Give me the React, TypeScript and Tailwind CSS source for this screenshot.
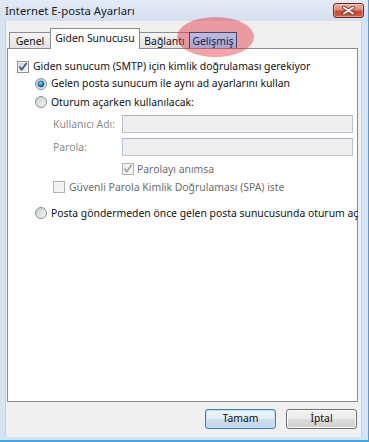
const FONT = "[font-family:'Noto_Sans','Liberation_Sans',sans-serif]";

function CheckBox({ checked, disabled, id }: { checked?: boolean; disabled?: boolean; id: string }) {
  const border = disabled ? '#b1b1b1' : '#8e8f8f';
  const from = disabled ? '#ececec' : '#cfd2d7';
  const to = disabled ? '#f7f7f7' : '#f6f6f6';
  const mark = disabled ? '#a3a3a3' : '#3d4f8c';
  return (
    <svg width="12" height="12" viewBox="0 0 12 12" className="shrink-0">
      <defs>
        <linearGradient id={id} x1="0" y1="0" x2="1" y2="1">
          <stop offset="0" stopColor={from} />
          <stop offset="1" stopColor={to} />
        </linearGradient>
      </defs>
      <rect x="0.5" y="0.5" width="11" height="11" fill="#f5f5f5" stroke={border} />
      <rect x="2" y="2" width="8" height="8" fill={`url(#${id})`} />
      {checked && (
        <path d="M2.4 5.6 L4.7 8.7 L9.6 1.9" fill="none" stroke={mark} strokeWidth="1.7" strokeLinejoin="round" />
      )}
    </svg>
  );
}

function Radio({ checked, id }: { checked?: boolean; id: string }) {
  return (
    <svg width="12" height="12" viewBox="0 0 12 12" className="shrink-0">
      <defs>
        <linearGradient id={id + 'o'} x1="0" y1="0" x2="1" y2="1">
          <stop offset="0" stopColor="#c4c7cc" />
          <stop offset="1" stopColor="#fbfbfb" />
        </linearGradient>
        <radialGradient id={id + 'd'} cx="0.4" cy="0.35" r="0.7">
          <stop offset="0" stopColor="#8fe0ff" />
          <stop offset="0.5" stopColor="#1d8fd0" />
          <stop offset="1" stopColor="#0b4f86" />
        </radialGradient>
      </defs>
      <circle cx="6" cy="6" r="5.5" fill={`url(#${id}o)`} stroke="#8e8f8f" />
      {checked && <circle cx="6" cy="6" r="3.1" fill={`url(#${id}d)`} stroke="#16466e" strokeWidth="0.6" />}
    </svg>
  );
}

function Button({ label, focused }: { label: string; focused?: boolean }) {
  return (
    <div
      className={`w-[71px] h-[20px] rounded-[3px] border flex items-center justify-center text-[10.4px] text-[#111] ${
        focused
          ? 'border-[#3c7fb1] shadow-[inset_0_0_0_1px_#bfe3f8] bg-[linear-gradient(to_bottom,#eef5fb_0%,#e3edf6_50%,#cddeee_50%,#c2d6ea_100%)]'
          : 'border-[#707070] shadow-[inset_0_0_0_1px_#fbfbfb] bg-[linear-gradient(to_bottom,#f2f2f2_0%,#ebebeb_50%,#dddddd_50%,#cfcfcf_100%)]'
      }`}
    >
      {label}
    </div>
  );
}

export default function App() {
  return (
    <div className={`${FONT} relative w-[369px] h-[442px] overflow-hidden bg-[#d8e3f1] flex flex-col border-r border-[#4f9fd6]`}>
      {/* title bar */}
      <div className="h-[21px] flex items-start justify-between bg-[linear-gradient(to_bottom,#e3ebf6,#d4e0ef)]">
        <div className="pl-[5px] pt-[3px] text-[11.3px] leading-[15px] text-[#1b1b1b]">Internet E-posta Ayarları</div>
        <div className="mt-[3px] mr-[4px] w-[31px] h-[15px] rounded-[3px] border border-[#6f2a20] bg-[linear-gradient(to_bottom,#eab3a5_0%,#de8a74_45%,#c74a2f_55%,#cf5e43_100%)] flex items-center justify-center shadow-[inset_0_0_0_1px_rgba(255,220,210,0.45)]">
          <svg width="13" height="9" viewBox="0 0 13 9">
            <path d="M2 1.5 L11 7.5 M11 1.5 L2 7.5" stroke="#6b3328" strokeWidth="3.6" strokeLinecap="round" />
            <path d="M2 1.5 L11 7.5 M11 1.5 L2 7.5" stroke="#ffffff" strokeWidth="2" strokeLinecap="round" />
          </svg>
        </div>
      </div>

      <div className="flex flex-1">
        <div className="w-[6px] border-r border-[#c3d2e6]" />
        {/* client area */}
        <div className="w-[355px] bg-[#f0f0f0] flex flex-col">
          {/* tabs */}
          <div className="pt-[7px] pl-[3px] h-[27px] flex items-end text-[10.4px] text-[#111]">
            <div className="w-[42px] h-[16px] border border-b-0 border-[#898c95] bg-[linear-gradient(to_bottom,#f4f4f4,#e2e2e2)] flex items-center justify-center leading-[14px] pt-[1px]">
              Genel
            </div>
            <div className="relative z-10 -ml-px -mb-px w-[90px] h-[21px] border border-b-0 border-[#898c95] bg-white flex justify-center pt-[2px] leading-[15px]">
              Giden Sunucusu
            </div>
            <div className="-ml-px w-[51px] h-[16px] border border-b-0 border-[#898c95] bg-[linear-gradient(to_bottom,#f4f4f4,#e2e2e2)] flex items-center justify-center leading-[14px] pt-[1px]">
              Bağlantı
            </div>
            <div className="relative z-30 -ml-px w-[48px] h-[16px] border border-b-0 border-[#3d4866] bg-[linear-gradient(to_bottom,#bdbbe2,#a7a4d2)] flex items-center justify-center leading-[14px] pt-[1px] text-[#1a1a3a]">
              Gelişmiş
            </div>
          </div>

          {/* panel */}
          <div className="ml-px w-[351px] h-[354px] border border-[#898c95] bg-white flex flex-col pt-[8px] text-[10.4px] leading-[15px] text-[#111] whitespace-nowrap">
            <div className="h-[19px] flex items-center pl-[9px] gap-[4px]">
              <CheckBox checked id="c1" />
              <span>Giden sunucum (SMTP) için kimlik doğrulaması gerekiyor</span>
            </div>
            <div className="h-[15px] flex items-center pl-[27px] gap-[4px]">
              <Radio checked id="r1" />
              <span>Gelen posta sunucum ile aynı ad ayarlarını kullan</span>
            </div>
            <div className="h-[22px] flex items-center pl-[27px] gap-[4px]">
              <Radio id="r2" />
              <span>Oturum açarken kullanılacak:</span>
            </div>
            <div className="mt-[2px] h-[18px] flex items-center pl-[45px]">
              <span className="w-[69px] text-[#8c8c8c]">Kullanıcı Adı:</span>
              <div className="w-[231px] h-[18px] border border-[#b7c4d4] border-t-[#a9b5c6] bg-[#efefef]" />
            </div>
            <div className="mt-[5px] h-[18px] flex items-center pl-[45px]">
              <span className="w-[69px] text-[#8c8c8c]">Parola:</span>
              <div className="w-[231px] h-[18px] border border-[#b7c4d4] border-t-[#a9b5c6] bg-[#efefef]" />
            </div>
            <div className="mt-[7px] h-[12px] flex items-center pl-[114px] gap-[3px] text-[#6d6d6d]">
              <CheckBox checked disabled id="c2" />
              <span>Parolayı anımsa</span>
            </div>
            <div className="mt-[6px] h-[12px] flex items-center pl-[45px] gap-[4px] text-[#6d6d6d]">
              <CheckBox disabled id="c3" />
              <span>Güvenli Parola Kimlik Doğrulaması (SPA) iste</span>
            </div>
            <div className="mt-[14px] h-[12px] flex items-center pl-[27px] gap-[4px]">
              <Radio id="r3" />
              <span>Posta göndermeden önce gelen posta sunucusunda oturum aç</span>
            </div>
          </div>

          {/* buttons */}
          <div className="mt-[7px] flex justify-end gap-[10px] pr-[4px]">
            <Button label="Tamam" focused />
            <Button label="İptal" />
          </div>
        </div>
        <div className="flex-1 border-l border-[#c3d2e6]" />
      </div>
      <div className="h-[5px] border-b-2 border-[#45a6e0]" />

      {/* annotation ellipse */}
      <div className="absolute z-20 left-[177px] top-[17px] w-[77px] h-[40px] rounded-[50%] bg-[rgba(228,50,60,0.45)] pointer-events-none" />
    </div>
  );
}
